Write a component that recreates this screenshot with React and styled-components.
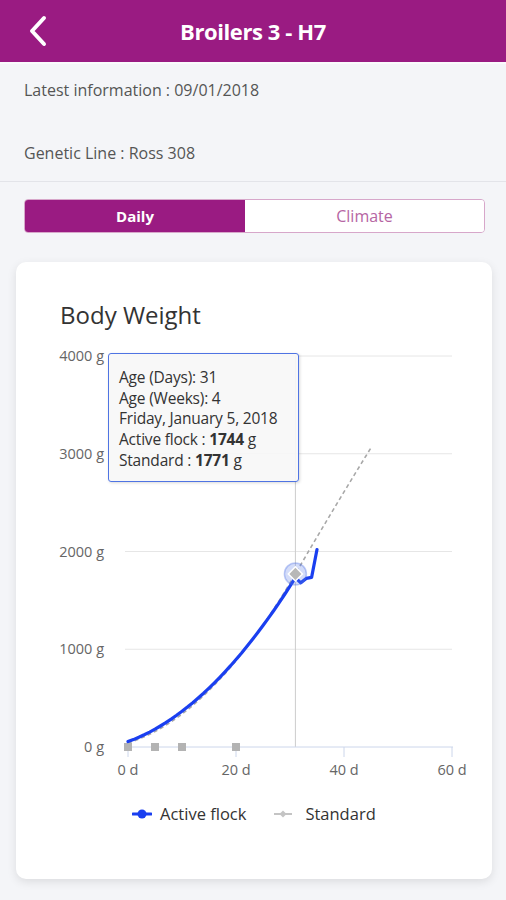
import React from "react";
import styled, { createGlobalStyle } from "styled-components";

const GlobalStyle = createGlobalStyle`
  body {
    margin: 0;
    background-color: #f4f5f8;
    font-family: "Open Sans", "Noto Sans", sans-serif;
  }
`;

const PURPLE = "#9a1b82";

const Page = styled.div`
  width: 506px;
  min-height: 900px;
  background-color: #f4f5f8;
  overflow: hidden;
`;

const Header = styled.header`
  height: 62px;
  background-color: ${PURPLE};
  display: grid;
  grid-template-columns: 62px 1fr 62px;
  align-items: center;
  border-bottom: 2px solid #fafafc;
`;

const BackButton = styled.button`
  background: none;
  border: none;
  padding: 0 0 0 28px;
  display: flex;
  align-items: center;
`;

const HeaderTitle = styled.h1`
  margin: 0;
  color: #ffffff;
  font-size: 22px;
  font-weight: 700;
  text-align: center;
  letter-spacing: -0.4px;
`;

const InfoSection = styled.section`
  padding: 16px 24px 0;
  border-bottom: 1px solid #e3e4e9;
`;

const InfoRow = styled.p`
  margin: 0 0 ${(p) => (p.$last ? "18px" : "43px")};
  font-size: 16px;
  line-height: 20px;
  color: #555555;
`;

const Tabs = styled.div`
  margin: 17px 21px 0 24px;
  height: 34px;
  display: grid;
  grid-template-columns: 221fr 240fr;
  border-radius: 4px;
  overflow: hidden;
  border: 1.5px solid #d7a7ca;
  box-sizing: border-box;
`;

const Tab = styled.div`
  display: flex;
  align-items: center;
  justify-content: center;
  font-size: ${(p) => (p.$active ? "15px" : "16px")};
  font-weight: ${(p) => (p.$active ? 700 : 400)};
  color: ${(p) => (p.$active ? "#ffffff" : "#b665a3")};
  background-color: ${(p) => (p.$active ? PURPLE : "#ffffff")};
`;

const Card = styled.section`
  margin: 29px 14px 0 16px;
  background-color: #ffffff;
  border-radius: 10px;
  box-shadow: 0 3px 10px rgba(0, 0, 0, 0.1);
  padding: 38px 0 55px;
`;

const CardTitle = styled.h2`
  margin: 0 0 9px 44px;
  font-size: 24px;
  line-height: 30px;
  font-weight: 400;
  color: #333333;
`;

const ChartWrap = styled.div`
  position: relative;
  height: 450px;
`;

const Tooltip = styled.div`
  position: absolute;
  left: 92px;
  top: 14px;
  width: 191px;
  height: 129px;
  box-sizing: border-box;
  padding: 13px 0 0 10px;
  background-color: rgba(247, 247, 247, 0.9);
  border: 1.5px solid #4f74e3;
  border-radius: 3px;
  box-shadow: 1px 1px 3px rgba(0, 0, 0, 0.15);
  font-size: 15.5px;
  line-height: 20.7px;
  color: #333333;
  letter-spacing: -0.2px;
`;

const TipLine = styled.div`
  white-space: nowrap;
  b {
    font-weight: 700;
  }
`;

const Legend = styled.div`
  margin-top: 15px;
  padding-left: 116px;
  display: flex;
  gap: 28px;
  font-size: 16.5px;
  line-height: 20px;
  color: #333333;
`;

const LegendItem = styled.div`
  display: flex;
  align-items: center;
  gap: ${(p) => p.$gap || "8px"};
`;

// chart scales (svg origin = page x 16, y 340)
const X = (d) => 112 + d * 5.4;
const Y = (v) => 408 - v * 0.09775;

const range = (from, to) => Array.from({ length: to - from + 1 }, (_, i) => from + i);

// Ross 308-like growth curves
const standardWeight = (d) =>
  d <= 31 ? 42 + 17 * d + 1.25 * d * d : 1771 + 95 * (d - 31) - 0.2 * (d - 31) * (d - 31);
const activeWeight = (d) => 55 + 20 * d + 1.1 * d * d;

const standard = range(0, 45).map((d) => [d, standardWeight(d)]);
const active = [
  ...range(0, 31).map((d) => [d, activeWeight(d)]),
  [32, 1680], [33, 1725], [34, 1735], [35, 2020],
];

const linePath = (data) =>
  data.map(([d, v], i) => `${i ? "L" : "M"}${X(d).toFixed(1)},${Y(v).toFixed(1)}`).join(" ");

const BodyWeightChart = () => {
  const yTicks = [0, 1000, 2000, 3000, 4000];
  const xTicks = [0, 20, 40, 60];
  const hx = X(31);
  const hy = Y(1771);

  return (
    <svg width="476" height="450" style={{ display: "block" }}>
      {yTicks.slice(1).map((v) => (
        <line key={v} x1="109" x2="436" y1={Y(v)} y2={Y(v)} stroke="#e6e6e6" strokeWidth="1" />
      ))}
      {yTicks.map((v) => (
        <text key={v} x="88" y={Y(v) + 5} textAnchor="end" fontSize="14.5" fill="#666666" fontFamily="Open Sans, sans-serif">
          {v} g
        </text>
      ))}
      {/* crosshair */}
      <line x1={hx} x2={hx} y1={Y(4000)} y2={Y(0)} stroke="#cccccc" strokeWidth="1" />
      {/* x axis */}
      <line x1="111" x2="437" y1={Y(0)} y2={Y(0)} stroke="#ccd6eb" strokeWidth="1" />
      {xTicks.map((d) => (
        <g key={d}>
          <line x1={X(d)} x2={X(d)} y1={Y(0)} y2={Y(0) + 10} stroke="#ccd6eb" strokeWidth="1" />
          <text x={X(d)} y="436" textAnchor="middle" fontSize="14.5" fill="#666666" fontFamily="Open Sans, sans-serif">
            {d} d
          </text>
        </g>
      ))}
      {/* standard series */}
      <path d={linePath(standard)} fill="none" stroke="#a8a8a8" strokeWidth="1.6" strokeDasharray="4,3" />
      {[0, 5, 10, 20].map((d) => (
        <rect key={d} x={X(d) - 4} y={Y(0) - 4} width="8" height="8" fill="#b3b3b3" />
      ))}
      {/* active flock */}
      <path d={linePath(active)} fill="none" stroke="#1a3ff0" strokeWidth="3.2" strokeLinejoin="round" strokeLinecap="round" />
      {/* hover marker */}
      <circle cx={hx} cy={hy} r="11" fill="rgba(80, 115, 230, 0.25)" stroke="rgba(80, 115, 230, 0.35)" strokeWidth="1.5" />
      <rect x={hx - 5} y={hy - 5} width="10" height="10" fill="#b8b8b8" stroke="#ffffff" strokeWidth="1.5" transform={`rotate(45 ${hx} ${hy})`} />
    </svg>
  );
};

const App = () => {
  return (
    <Page>
      <GlobalStyle />
      <Header>
        <BackButton aria-label="Back">
          <svg width="20" height="32" viewBox="0 0 20 32">
            <polyline points="16,3 4,16 16,29" fill="none" stroke="#ffffff" strokeWidth="4" strokeLinecap="round" strokeLinejoin="round" />
          </svg>
        </BackButton>
        <HeaderTitle>Broilers 3 - H7</HeaderTitle>
        <div />
      </Header>

      <InfoSection>
        <InfoRow>Latest information : 09/01/2018</InfoRow>
        <InfoRow $last>Genetic Line : Ross 308</InfoRow>
      </InfoSection>

      <Tabs>
        <Tab $active>Daily</Tab>
        <Tab>Climate</Tab>
      </Tabs>

      <Card>
        <CardTitle>Body Weight</CardTitle>
        <ChartWrap>
          <BodyWeightChart />
          <Tooltip>
            <TipLine>Age (Days): 31</TipLine>
            <TipLine>Age (Weeks): 4</TipLine>
            <TipLine>Friday, January 5, 2018</TipLine>
            <TipLine>Active flock : <b>1744</b> g</TipLine>
            <TipLine>Standard : <b>1771</b> g</TipLine>
          </Tooltip>
        </ChartWrap>
        <Legend>
          <LegendItem>
            <svg width="20" height="10">
              <line x1="1" x2="19" y1="5" y2="5" stroke="#1a3ff0" strokeWidth="3" strokeLinecap="round" />
              <circle cx="10" cy="5" r="4.5" fill="#1a3ff0" />
            </svg>
            Active flock
          </LegendItem>
          <LegendItem $gap="13px">
            <svg width="18" height="10">
              <line x1="0" x2="18" y1="5" y2="5" stroke="#c4c4c4" strokeWidth="2" />
              <rect x="6.5" y="2.5" width="5" height="5" fill="#c4c4c4" transform="rotate(45 9 5)" />
            </svg>
            Standard
          </LegendItem>
        </Legend>
      </Card>
    </Page>
  );
};

export default App;
